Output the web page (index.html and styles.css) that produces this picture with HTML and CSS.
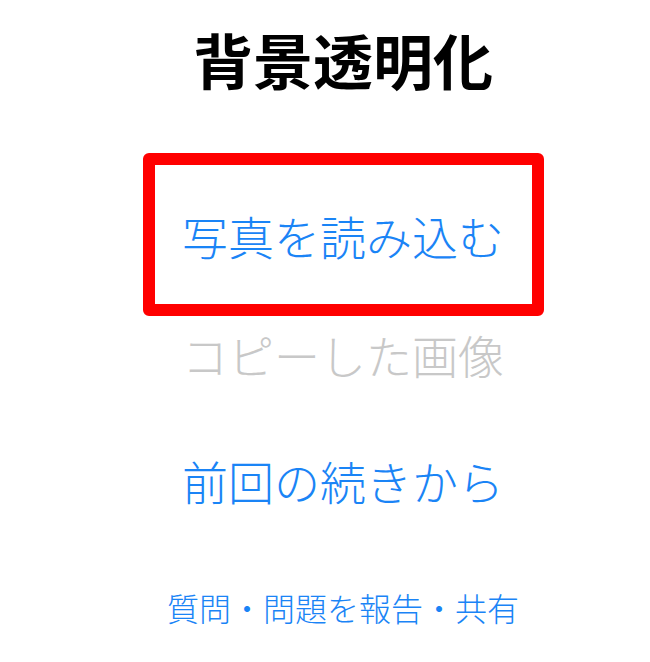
FILE: index.html
```html
<!DOCTYPE html>
<html lang="ja">
<head>
<meta charset="utf-8">
<link rel="stylesheet" href="styles.css">
</head>
<body>
<main class="screen">
  <h1 class="title">背景透明化</h1>
  <div class="load-box"><span class="action">写真を読み込む</span></div>
  <div class="action disabled">コピーした画像</div>
  <div class="action resume">前回の続きから</div>
  <div class="report">質問・問題を報告・共有</div>
</main>
</body>
</html>
```
FILE: styles.css
```css
html, body {
  margin: 0;
  padding: 0;
  background: #ffffff;
}
body {
  font-family: "Noto Sans CJK JP", "Noto Sans", sans-serif;
}
.screen {
  box-sizing: border-box;
  width: 650px;
  height: 662px;
  padding-left: 36px;
  display: flex;
  flex-direction: column;
  align-items: center;
}
.title {
  margin: 29px 0 0 0;
  font-size: 60px;
  line-height: 60px;
  font-weight: 700;
  color: #000;
}
.load-box {
  margin-top: 64px;
  box-sizing: border-box;
  width: 401px;
  height: 163px;
  border: 12px solid #ff0000;
  border-radius: 6px;
  display: flex;
  align-items: center;
  justify-content: center;
}
.action {
  font-size: 46px;
  line-height: 46px;
  font-weight: 300;
  color: #1a84f6;
}
.disabled {
  color: #c8c8c8;
  margin-top: 15px;
}
.resume {
  margin-top: 80px;
}
.report {
  margin-top: 88px;
  font-size: 32px;
  line-height: 32px;
  font-weight: 300;
  color: #1a84f6;
}
```
